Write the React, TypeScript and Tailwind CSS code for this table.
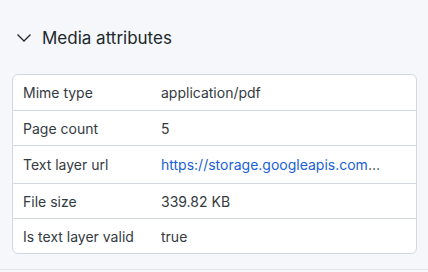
import React from 'react';

const ROWS = [
  { label: 'Mime type', value: 'application/pdf', h: 'h-[35px]' },
  { label: 'Page count', value: '5', h: 'h-[35px]' },
  {
    label: 'Text layer url',
    value: 'https://storage.googleapis.com/media-attributes/text-layer.json',
    link: true,
    h: 'h-[38px]',
  },
  { label: 'File size', value: '339.82 KB', h: 'h-[35px]' },
  { label: 'Is text layer valid', value: 'true', h: 'h-[35px]' },
];

const Chevron = () => (
  <svg width="16" height="16" viewBox="0 0 16 16" fill="none" className="text-[#21272a]">
    <path d="M1.5 4.5 L8 11 L14.5 4.5" stroke="currentColor" strokeWidth="1.3" />
  </svg>
);

export default function App() {
  return (
    <div
      className="w-[428px] h-[272px] bg-[#f5f7fa] overflow-hidden"
      style={{ fontFamily: 'Inter, "Noto Sans", sans-serif' }}
    >
      <div className="flex items-center gap-[10px] pl-[16px] pt-[25px] h-[51px]">
        <Chevron />
        <span className="text-[17px] text-[#21272a] leading-none">Media attributes</span>
      </div>

      <div className="mt-[23px] ml-[12px] w-[405px] bg-white border border-[#d3d8e0] rounded-[6px] overflow-hidden">
        {ROWS.map((row, i) => (
          <div
            key={row.label}
            className={`flex items-center text-[14px] text-[#343a3f] ${row.h} ${
              i > 0 ? 'border-t border-[#d3d8e0]' : ''
            }`}
          >
            <div className="w-[148px] shrink-0 pl-[10px]">{row.label}</div>
            <div className="min-w-0 w-[220px] truncate">
              {row.link ? <a className="text-[#1a5fd6]">{row.value}</a> : row.value}
            </div>
          </div>
        ))}
      </div>

      <div className="mt-[15px] border-t border-[#e1e5eb]" />
    </div>
  );
}
